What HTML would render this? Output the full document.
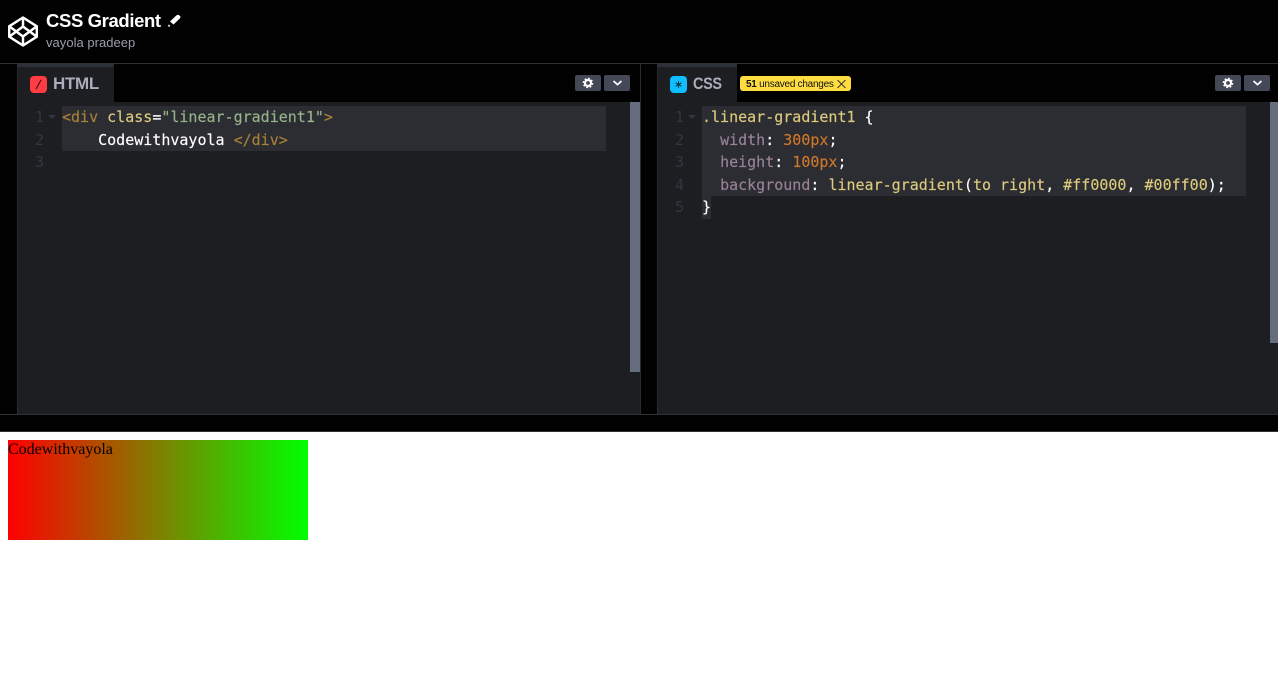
<!DOCTYPE html>
<html>
<head>
<meta charset="utf-8">
<style>
html,body{margin:0;padding:0;width:1278px;height:676px;overflow:hidden;background:#fff}
.a{position:absolute}
.sans{font-family:"Liberation Sans",sans-serif;white-space:nowrap}
.code{position:absolute;font:15px/22.5px "DejaVu Sans Mono","Liberation Mono",monospace;white-space:pre;color:#fff;-webkit-text-stroke:.15px}
.ln{position:absolute;font:15px/22.5px "DejaVu Sans Mono",monospace;color:#34363e;text-align:right;width:20px}
.t{color:#ddca7e}.g{color:#a88038}.s{color:#96b38a}.p{color:#9a8297}.n{color:#d0782a}
.btn{position:absolute;top:75px;width:26px;height:16px;background:#444857;border-radius:2px}
</style>
</head>
<body>
<div class="a" style="left:0;top:0;width:1278px;height:432px;background:#010101"></div>
<div class="a" style="left:0;top:63px;width:1278px;height:1px;background:#2f3033"></div>

<!-- logo -->
<svg class="a" style="left:8px;top:16px" width="30" height="31" viewBox="0 0 30 31" fill="none" stroke="#fff" stroke-width="2.5" stroke-linejoin="round">
<path d="M15 1.5 28.8 10.3V20.7L15 29.5 1.2 20.7V10.3Z"/>
<path d="M15 1.5V10.5M15 20.5V29.5M1.2 10.3 15 20.5 28.8 10.3M1.2 20.7 15 10.5 28.8 20.7"/>
</svg>
<div class="a sans" style="left:46px;top:9px;font-size:18.5px;line-height:24px;font-weight:700;color:#fff;letter-spacing:-.38px">CSS Gradient</div>
<svg class="a" style="left:166px;top:13px" width="16" height="15" viewBox="0 0 16 15">
<path d="M4 8.5 10 2.8C11 1.9 12 1.6 13 2.1L14.2 3.2C14.8 4 14.3 5 13.5 5.8L7.5 11.5Z" fill="#fff"/>
<circle cx="3" cy="12.7" r="1.1" fill="#fff" opacity=".8"/>
</svg>
<div class="a sans" style="left:46px;top:35px;font-size:13px;line-height:15px;color:#9b9dad;letter-spacing:.03px">vayola pradeep</div>

<!-- left panel -->
<div class="a" style="left:17px;top:64px;width:1px;height:350px;background:#2a2b2f"></div>
<div class="a" style="left:18px;top:102px;width:622px;height:312px;background:#1d1e22"></div>
<div class="a" style="left:18px;top:64px;width:96px;height:38px;background:#1d1e22"></div>
<div class="a" style="left:18px;top:64px;width:96px;height:3px;background:#2c303a"></div>
<div class="a" style="left:30px;top:76px;width:17px;height:17px;border-radius:4px;background:#ff3c41"></div>
<svg class="a" style="left:30px;top:76px" width="17" height="17"><path d="M6 13 11 4" stroke="#3b1015" stroke-width="1.1"/></svg>
<div class="a sans" style="left:53px;top:74px;font-size:17px;line-height:20px;font-weight:700;color:#aaaebc;letter-spacing:-.3px">HTML</div>
<div class="btn" style="left:575px"></div>
<div class="btn" style="left:604px"></div>
<svg class="a" style="left:575px;top:75px" width="55" height="16" fill="none">
<circle cx="13" cy="8" r="3" stroke="#fff" stroke-width="2.2"/>
<circle cx="13" cy="8" r="4.6" stroke="#fff" stroke-width="1.4" stroke-dasharray="1.8 1.8"/>
<path d="M38.5 6 42.5 9.6 46.5 6" stroke="#fff" stroke-width="1.7"/>
</svg>
<div class="a" style="left:62px;top:106px;width:544px;height:45px;background:#2c2d32"></div>
<div class="ln" style="left:24px;top:106px">1<br>2<br>3</div>
<svg class="a" style="left:47px;top:114px" width="10" height="6"><path d="M1 1H9L5 5Z" fill="#34363e"/></svg>
<div class="code" style="left:62px;top:106px"><span class="g">&lt;div</span> <span class="t">class</span>=<span class="s">"linear-gradient1"</span><span class="g">&gt;</span>
    Codewithvayola <span class="g">&lt;/div&gt;</span></div>
<div class="a" style="left:630px;top:102px;width:10px;height:270px;background:#666d7e"></div>
<div class="a" style="left:640px;top:64px;width:1px;height:350px;background:#2a2b2f"></div>

<!-- right panel -->
<div class="a" style="left:657px;top:64px;width:1px;height:350px;background:#2a2b2f"></div>
<div class="a" style="left:658px;top:102px;width:620px;height:312px;background:#1d1e22"></div>
<div class="a" style="left:658px;top:64px;width:79px;height:38px;background:#1d1e22"></div>
<div class="a" style="left:658px;top:64px;width:79px;height:3px;background:#2c303a"></div>
<div class="a" style="left:670px;top:76px;width:17px;height:17px;border-radius:4px;background:#0ebeff"></div>
<svg class="a" style="left:670px;top:76px" width="17" height="17" stroke="#0c2b3a" stroke-width="1"><path d="M8.5 5.2V11.8M5.6 6.8 11.4 10.2M11.4 6.8 5.6 10.2"/></svg>
<div class="a sans" style="left:693px;top:74px;font-size:17px;line-height:20px;font-weight:700;color:#aaaebc;letter-spacing:-.4px;transform:scaleX(.85);transform-origin:left">CSS</div>
<div class="a" style="left:740px;top:76px;width:111px;height:15px;border-radius:3px;background:#ffdd40"></div>
<div class="a sans" style="left:746px;top:77px;font-size:10px;line-height:15px;color:#111;letter-spacing:-.26px"><b>51</b> unsaved changes</div>
<svg class="a" style="left:836px;top:78px" width="11" height="11"><path d="M1.5 2 9.5 10M9.5 2 1.5 10" stroke="#333" stroke-width="1"/></svg>
<div class="btn" style="left:1215px"></div>
<div class="btn" style="left:1244px"></div>
<svg class="a" style="left:1215px;top:75px" width="55" height="16" fill="none">
<circle cx="13" cy="8" r="3" stroke="#fff" stroke-width="2.2"/>
<circle cx="13" cy="8" r="4.6" stroke="#fff" stroke-width="1.4" stroke-dasharray="1.8 1.8"/>
<path d="M38.5 6 42.5 9.6 46.5 6" stroke="#fff" stroke-width="1.7"/>
</svg>
<div class="a" style="left:702px;top:106px;width:544px;height:90px;background:#2c2d32"></div>
<div class="a" style="left:702px;top:196px;width:9px;height:23px;background:#2c2d32"></div>
<div class="ln" style="left:664px;top:106px">1<br>2<br>3<br>4<br>5</div>
<svg class="a" style="left:687px;top:114px" width="10" height="6"><path d="M1 1H9L5 5Z" fill="#34363e"/></svg>
<div class="code" style="left:702px;top:106px"><span class="t">.linear-gradient1</span> {
  <span class="p">width</span>: <span class="n">300px</span>;
  <span class="p">height</span>: <span class="n">100px</span>;
  <span class="p">background</span>: <span class="t">linear-gradient</span>(<span class="t">to right</span>, <span class="t">#ff0000</span>, <span class="t">#00ff00</span>);
}</div>
<div class="a" style="left:1270px;top:102px;width:8px;height:241px;background:#666d7e"></div>

<!-- dividers -->
<div class="a" style="left:0;top:414px;width:1278px;height:1px;background:#2f3033"></div>
<div class="a" style="left:0;top:431px;width:1278px;height:1px;background:#2f3033"></div>

<!-- preview -->
<div class="a" style="left:8px;top:440px;width:300px;height:100px;background:linear-gradient(to right,#ff0000,#00ff00)"></div>
<div class="a" style="left:8px;top:441px;font:16px/18px 'Liberation Serif',serif;color:#000;white-space:nowrap">Codewithvayola</div>
</body>
</html>
